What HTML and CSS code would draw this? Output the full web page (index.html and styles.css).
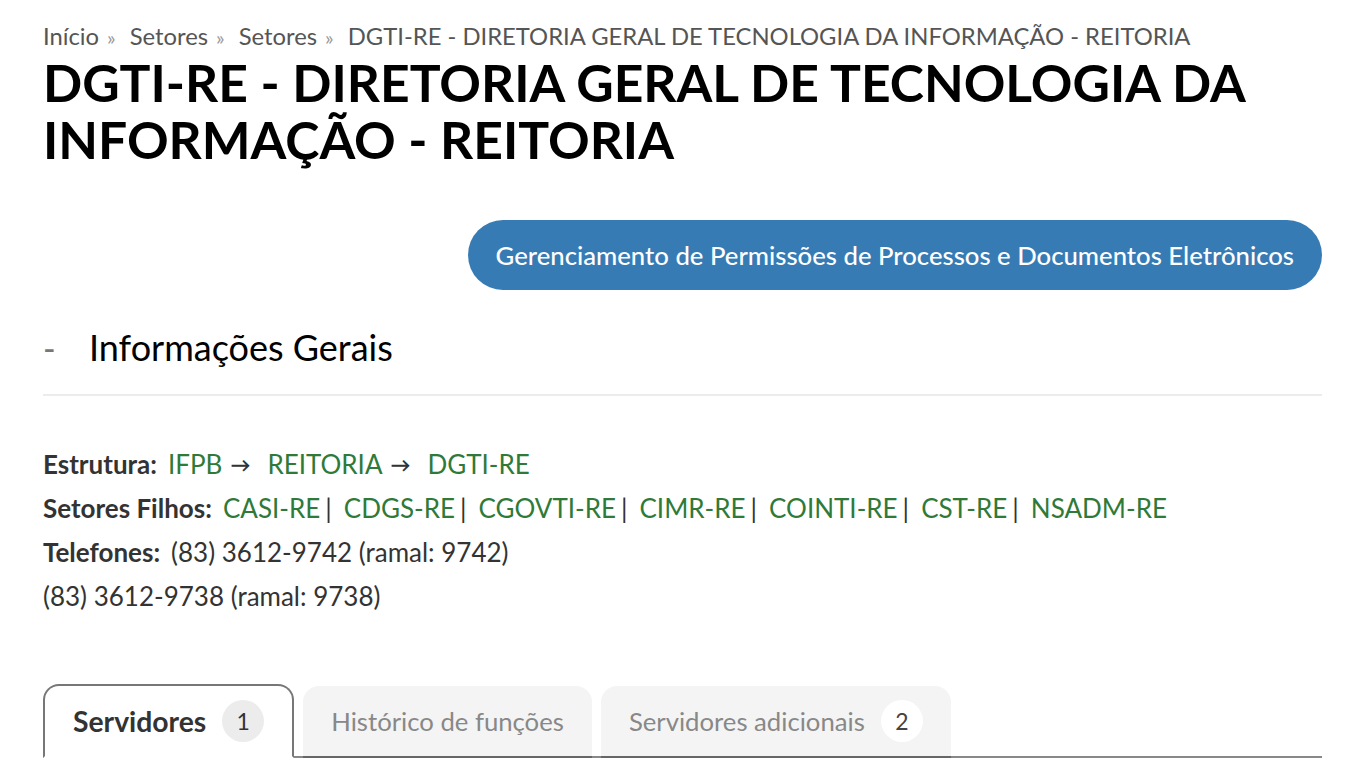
FILE: index.html
```html
<!DOCTYPE html>
<html lang="pt-BR">
<head>
<meta charset="utf-8">
<title>DGTI-RE</title>
<link rel="stylesheet" href="styles.css">
</head>
<body>
<div class="page">
  <nav class="breadcrumb">
    <a href="#">Início</a><span class="sep">»</span>
    <a href="#">Setores</a><span class="sep">»</span>
    <a href="#">Setores</a><span class="sep">»</span>
    <span class="current">DGTI-RE - DIRETORIA GERAL DE TECNOLOGIA DA INFORMAÇÃO - REITORIA</span>
  </nav>
  <h1 class="title">DGTI-RE - DIRETORIA GERAL DE TECNOLOGIA DA INFORMAÇÃO - REITORIA</h1>
  <div class="actions">
    <a class="btn" href="#">Gerenciamento de Permissões de Processos e Documentos Eletrônicos</a>
  </div>
  <div class="box-header">
    <span class="toggle">-</span>
    <h2 class="box-title">Informações Gerais</h2>
  </div>
  <div class="info">
    <p class="line"><strong class="label">Estrutura:</strong><a href="#">IFPB</a><span class="arrow">→</span><a href="#">REITORIA</a><span class="arrow">→</span><a href="#">DGTI-RE</a></p>
    <p class="line"><strong class="label">Setores Filhos:</strong><a href="#">CASI-RE</a><span class="pipe">|</span><a href="#">CDGS-RE</a><span class="pipe">|</span><a href="#">CGOVTI-RE</a><span class="pipe">|</span><a href="#">CIMR-RE</a><span class="pipe">|</span><a href="#">COINTI-RE</a><span class="pipe">|</span><a href="#">CST-RE</a><span class="pipe">|</span><a href="#">NSADM-RE</a></p>
    <p class="line"><strong class="label">Telefones:</strong>(83) 3612-9742 (ramal: 9742)</p>
    <p class="line">(83) 3612-9738 (ramal: 9738)</p>
  </div>
  <ul class="tabs">
    <li class="tab active"><span class="tab-label">Servidores</span><span class="badge">1</span></li>
    <li class="tab"><span class="tab-label">Histórico de funções</span></li>
    <li class="tab"><span class="tab-label">Servidores adicionais</span><span class="badge">2</span></li>
  </ul>
</div>
</body>
</html>
```
FILE: styles.css
```css
html, body {
  margin: 0;
  padding: 0;
  background: #fff;
}
body {
  font-family: Lato, "Open Sans", "Liberation Sans", sans-serif;
  color: #333;
}
a { text-decoration: none; }
.page {
  padding: 19px 28px 0 43px;
}
.breadcrumb {
  font-size: 23.8px;
  line-height: 34px;
  color: #555;
}
.breadcrumb a { color: #555; }
.breadcrumb .sep {
  color: #999;
  margin: 0 8px;
  font-size: 20px;
}
.title {
  margin: 0;
  font-size: 51.6px;
  line-height: 57px;
  font-weight: 700;
  color: #000;
}
.actions {
  display: flex;
  justify-content: flex-end;
  margin-top: 52px;
}
.btn {
  display: flex;
  align-items: center;
  height: 70px;
  padding: 0 28px;
  border-radius: 35px;
  background: #377bb5;
  color: #fff;
  font-size: 25.7px;
  font-weight: 500;
}
.box-header {
  display: flex;
  align-items: center;
  margin-top: 36px;
  padding-bottom: 26px;
  border-bottom: 2px solid #ececec;
}
.toggle {
  width: 46px;
  font-size: 34px;
  color: #777;
}
.box-title {
  margin: 0;
  font-size: 36px;
  line-height: 42px;
  font-weight: 400;
  color: #000;
}
.info {
  margin-top: 46px;
}
.line {
  margin: 0;
  font-size: 26px;
  line-height: 44px;
  color: #333;
}
.label {
  font-weight: 700;
  margin-right: 11px;
}
.line a { color: #2f7a38; }
.arrow {
  display: inline-block;
  color: #333;
  font-size: 20px;
  font-weight: 700;
  margin: 0 17px 0 8px;
  vertical-align: 2px;
}
.pipe {
  margin: 0 12px 0 5px;
  color: #333;
}
.tabs {
  display: flex;
  gap: 9px;
  list-style: none;
  margin: 66px 0 0 0;
  padding: 0;
  border-bottom: 2px solid #888;
}
.tab {
  display: flex;
  align-items: center;
  gap: 16px;
  padding: 0 28px;
  background: #f4f4f4;
  color: #888;
  font-size: 25.7px;
  border-radius: 16px 16px 0 0;
  margin-bottom: -2px;
  border-bottom: 2px solid #666;
  box-sizing: border-box;
  height: 72px;
  margin-top: 2px;
}
.tab.active {
  background: #fff;
  color: #333;
  border: 2px solid #777;
  border-bottom: 2px solid #fff;
  margin-top: 0;
  height: 74px;
  padding: 0 28px;
}
.tab.active .tab-label {
  font-weight: 700;
  font-size: 28.3px;
}
.badge {
  display: inline-flex;
  align-items: center;
  justify-content: center;
  width: 42px;
  height: 42px;
  border-radius: 50%;
  background: #fff;
  color: #444;
  font-size: 23px;
  font-weight: 400;
}
.tab.active .badge {
  background: #ececec;
  color: #333;
}
```
